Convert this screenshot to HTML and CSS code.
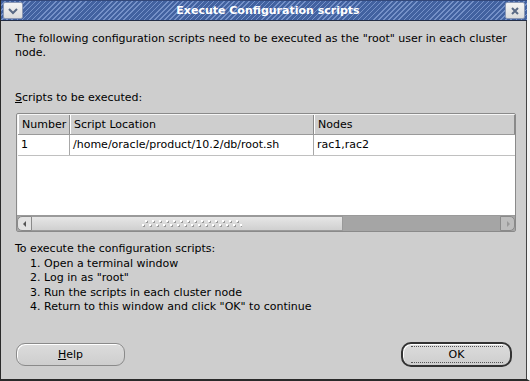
FILE: index.html
```html
<!DOCTYPE html>
<html>
<head>
<meta charset="utf-8">
<link rel="stylesheet" href="styles.css">
</head>
<body>
<div class="window">
  <div class="titlebar">
    <div class="tbtn">
      <svg width="12" height="8" viewBox="0 0 12 8"><path d="M2 2 L6 6 L10 2" fill="none" stroke="#5a6a85" stroke-width="2"/></svg>
    </div>
    <div class="title">Execute Configuration scripts</div>
    <div class="tbtn">
      <svg width="10" height="10" viewBox="0 0 10 10"><path d="M2 2 L8 8 M8 2 L2 8" fill="none" stroke="#5a6a85" stroke-width="2"/></svg>
    </div>
  </div>
  <div class="content">
    <p class="intro">The following configuration scripts need to be executed as the "root" user in each cluster node.</p>
    <div class="label"><u>S</u>cripts to be executed:</div>
    <div class="table">
      <div class="grid">
        <div class="row head">
          <div class="c1">Number</div>
          <div class="c2">Script Location</div>
          <div class="c3">Nodes</div>
        </div>
        <div class="row data">
          <div class="c1">1</div>
          <div class="c2">/home/oracle/product/10.2/db/root.sh</div>
          <div class="c3">rac1,rac2</div>
        </div>
        <div class="empty"></div>
      </div>
      <div class="hscroll">
        <div class="arrow left"><svg width="6" height="8" viewBox="0 0 6 8"><path d="M4 1 L1 4 L4 7 Z" fill="#555"/></svg></div>
        <div class="thumb"><div class="grip"></div></div>
        <div class="trough"></div>
        <div class="arrow right"><svg width="6" height="8" viewBox="0 0 6 8"><path d="M2 1 L5 4 L2 7 Z" fill="#999"/></svg></div>
      </div>
    </div>
    <div class="steps">
      <div>To execute the configuration scripts:</div>
      <ol>
        <li>Open a terminal window</li>
        <li>Log in as "root"</li>
        <li>Run the scripts in each cluster node</li>
        <li>Return to this window and click "OK" to continue</li>
      </ol>
    </div>
    <div class="buttons">
      <button class="btn help"><u>H</u>elp</button>
      <button class="btn ok"><span class="focus">OK</span></button>
    </div>
  </div>
</div>
</body>
</html>
```
FILE: styles.css
```css
* { box-sizing: border-box; }
html, body { margin: 0; padding: 0; background: #cecece; }
body { font-family: "DejaVu Sans", sans-serif; font-size: 11px; color: #000; }
.window {
  width: 530px; height: 381px;
  display: flex; flex-direction: column;
  background: #cecece;
  border-left: 1px solid #2a2a2a;
  border-right: 3px solid #f4f4f4;
  border-bottom: 2px solid #2a2a2a;
  box-shadow: inset -1px 0 0 #444;
}
.titlebar {
  height: 21px; flex: none;
  display: flex; align-items: center; justify-content: space-between;
  padding: 0 2px 0 2px;
  background: repeating-linear-gradient(135deg, #4262a0 0 2.5px, #7591c8 2.5px 3.6px);
  border-top: 1px solid #33487a;
  border-bottom: 1px solid #222c44;
}
.tbtn {
  width: 20px; height: 17px;
  background: linear-gradient(#f4f4f4, #dcdcdc);
  border: 1px solid #8a97b4;
  border-radius: 2px;
  display: flex; align-items: center; justify-content: center;
}
.title {
  color: #fff; font-weight: bold; font-size: 11px;
  padding-left: 8px;
}
.content {
  flex: 1;
  padding: 11px 14px 0 14px;
  display: flex; flex-direction: column;
}
.intro { margin: 0; line-height: 14px; width: 495px; }
.label { margin-top: 31px; line-height: 14px; }
.table {
  margin-top: 8px; margin-left: 1px;
  width: 500px; height: 119px;
  border: 1px solid #8a8a8a;
  border-radius: 2px;
  background: #fff;
  display: flex; flex-direction: column;
  box-shadow: inset 1px 1px 0 #f6f6f6;
}
.grid { flex: 1; display: flex; flex-direction: column; padding: 1px 0 0 1px; }
.row { display: flex; height: 20px; line-height: 19px; }
.row > div { padding-left: 3px; white-space: nowrap; overflow: hidden; }
.c1 { width: 52px; }
.c2 { width: 244px; }
.c3 { flex: 1; }
.head { background: #cecece; border-bottom: 1px solid #9a9a9a; }
.head > div { border-left: 1px solid #fff; border-right: 1px solid #8a8a8a; }
.data { border-bottom: 1px solid #c0c0c0; height: 21px; }
.data > div { border-right: 1px solid #a8a8a8; }
.data > .c3 { border-right: none; }
.empty { flex: 1; }
.hscroll {
  height: 16px; flex: none;
  display: flex;
  background: #a5a5a5;
  border-top: 1px solid #9a9a9a;
}
.arrow {
  width: 15px; display: flex; align-items: center; justify-content: center;
  background: #d6d6d6;
  border: 1px solid #8a8a8a;
}
.arrow.left { border-radius: 5px 0 0 5px; background: #e2e2e2; }
.arrow.right { border-radius: 0 5px 5px 0; background: #bdbdbd; }
.thumb {
  width: 311px;
  background: linear-gradient(#e6e6e6, #d0d0d0);
  border: 1px solid #9a9a9a;
  border-left: none;
  display: flex; align-items: center; justify-content: center;
}
.grip {
  width: 100px; height: 7px; margin-left: 10px;
  background-image:
    radial-gradient(circle at 1px 1px, #fff 0 0.8px, transparent 0.9px),
    radial-gradient(circle at 2px 2px, #9a9a9a 0 0.8px, transparent 0.9px),
    radial-gradient(circle at 1px 1px, #fff 0 0.8px, transparent 0.9px),
    radial-gradient(circle at 2px 2px, #9a9a9a 0 0.8px, transparent 0.9px);
  background-size: 7px 7px;
  background-position: 3px 0, 3px 0, 0 4px, 0 4px;
  background-repeat: repeat-x;
}
.trough { flex: 1; }
.steps { margin-top: 10px; line-height: 14.4px; }
.steps ol { margin: 0.5px 0 0 0; padding-left: 29px; }
.buttons {
  margin-top: auto; margin-bottom: 12px;
  display: flex; justify-content: space-between;
  padding-left: 1px; padding-right: 1px;
}
.btn {
  font-family: "DejaVu Sans", sans-serif; font-size: 11px; color: #000;
  width: 109px; height: 23px;
  border-radius: 9px;
  background: linear-gradient(#dcdcdc, #cecece);
  border: 1px solid #8a8a8a;
  box-shadow: inset 1px 1px 0 #fff;
  padding: 0;
}
.btn.ok {
  width: 111px; height: 25px;
  border: 2px solid #333;
  border-radius: 10px;
  margin-top: -1px;
  display: flex; align-items: center; justify-content: center;
}
.focus {
  display: block; width: 92px; line-height: 15px;
  border-top: 1px dotted #555; border-bottom: 1px dotted #555;
  text-align: center;
}
```
